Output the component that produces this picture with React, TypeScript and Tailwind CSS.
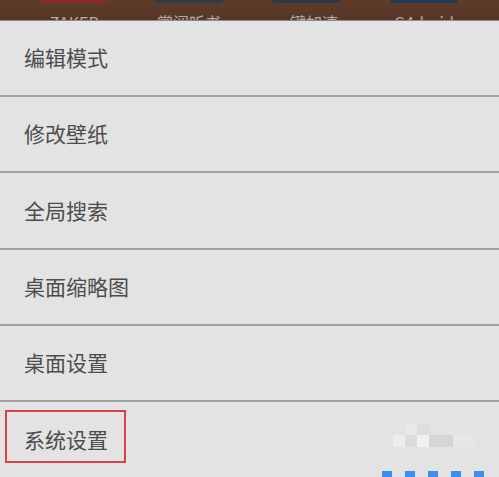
import React from 'react';

const items = ['编辑模式', '修改壁纸', '全局搜索', '桌面缩略图', '桌面设置', '系统设置'];

// 顶部被菜单遮住的桌面图标一行
const apps = [
  { label: 'ZAKER', color: 'bg-[#8a2a2c]', left: 'left-[40px]' },
  { label: '掌阅听书', color: 'bg-[#2f3d44]', left: 'left-[155px]' },
  { label: '一键加速', color: 'bg-[#2a3a4c]', left: 'left-[272px]' },
  { label: 'G4droid', color: 'bg-[#263a52]', left: 'left-[390px]' },
];

function DesktopStrip() {
  return (
    <div className="relative h-[21px] overflow-hidden bg-gradient-to-b from-[#5e3c2a] to-[#553626] border-b border-[#8a8a8a]">
      {apps.map((a) => (
        <div key={a.label} className={`absolute top-0 ${a.left} w-[68px]`}>
          <div className={`h-[3px] rounded-b ${a.color}`}></div>
          <div className="mt-[9px] text-center text-[16px] leading-[20px] text-[#b9aca4]">{a.label}</div>
        </div>
      ))}
    </div>
  );
}

export default function App() {
  return (
    <div className="w-[499px] h-[477px] overflow-hidden bg-[#e3e3e3] relative" style={{ fontFamily: '"Noto Sans CJK SC", "Noto Sans", sans-serif' }}>
      <DesktopStrip />
      <div className="flex flex-col">
        {items.map((t, i) => (
          <div
            key={t}
            className={`${i === 2 ? 'h-[77px]' : 'h-[76px]'} flex items-center pl-[24px] text-[21px] text-[#4c4c4c] ${i < items.length - 1 ? 'border-b-2 border-[#a2a2a2]' : ''}`}
          >
            {t}
          </div>
        ))}
      </div>

      {/* 标注框 */}
      <div className="absolute left-[5px] top-[410px] w-[121px] h-[53px] border-2 border-[#d8404a]"></div>

      {/* 右下角的模糊像素块 */}
      <div className="absolute left-[405px] top-[423px] flex">
        <div className="w-[12px] h-[12px] bg-[#e8e8e8]"></div>
        <div className="w-[12px] h-[12px] bg-[#dedede]"></div>
      </div>
      <div className="absolute left-[393px] top-[435px] flex">
        <div className="w-[12px] h-[12px] bg-[#eeeeee]"></div>
        <div className="w-[12px] h-[12px] bg-[#dcdcdc]"></div>
        <div className="w-[12px] h-[12px] bg-[#f2f2f2]"></div>
        <div className="w-[24px] h-[12px] bg-[#d6d6d6]"></div>
        <div className="w-[24px] h-[12px] bg-[#e6e6e6]"></div>
      </div>
      <div className="absolute left-[382px] top-[471px] flex gap-[13px]">
        {[0, 1, 2, 3, 4].map((k) => (
          <div key={k} className="w-[10px] h-[6px] bg-[#3a8ff2]"></div>
        ))}
      </div>
    </div>
  );
}
